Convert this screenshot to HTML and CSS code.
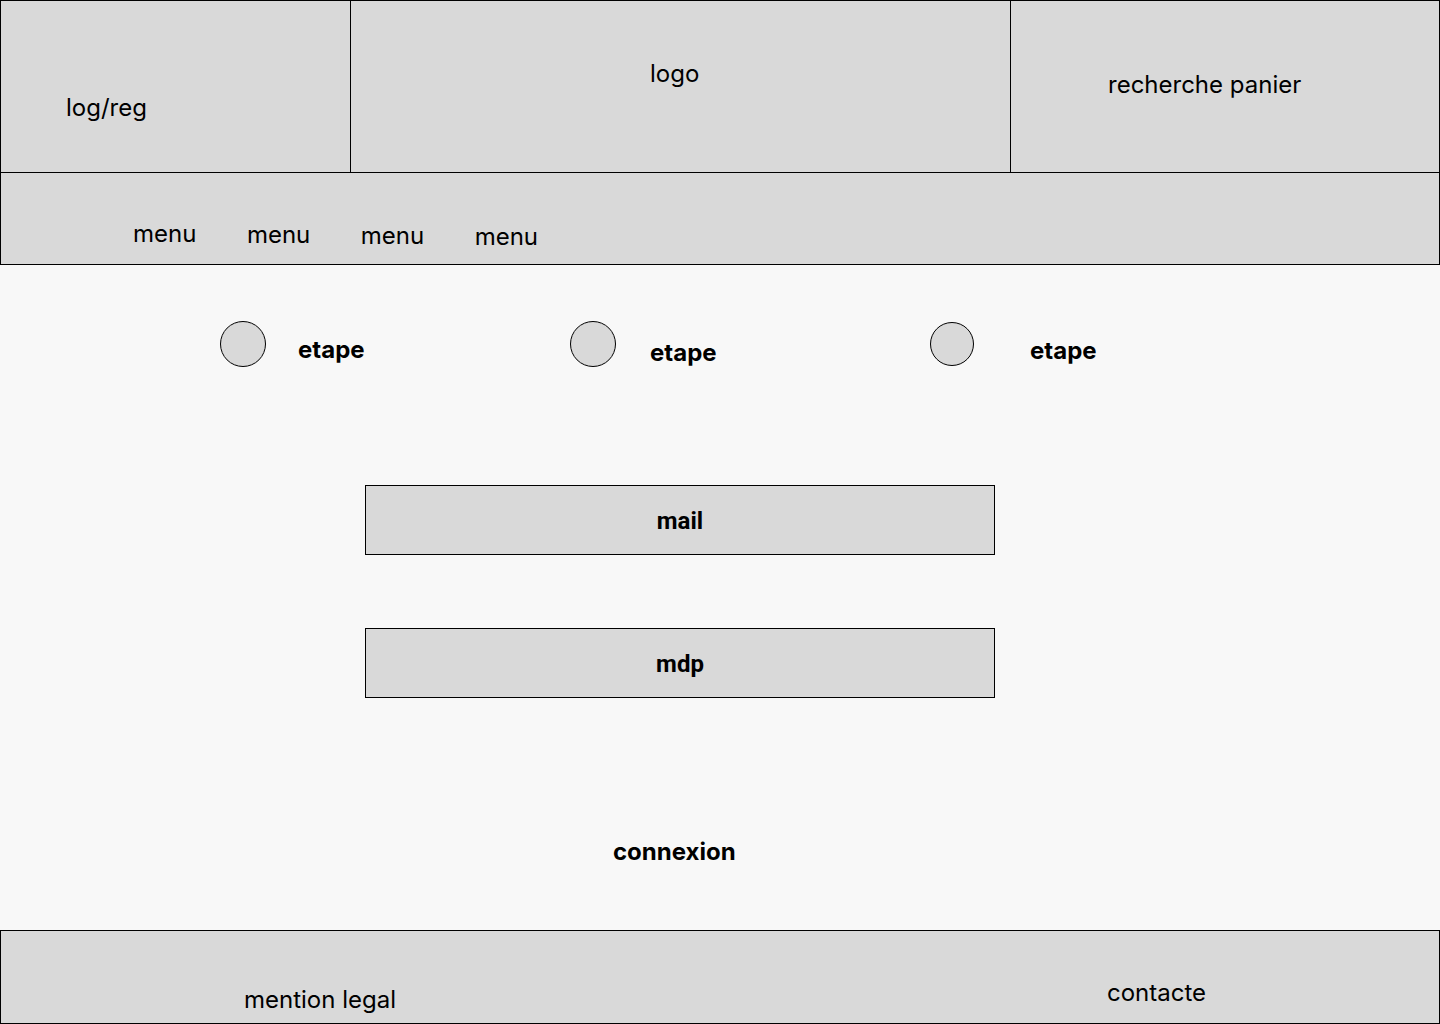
FILE: index.html
```html
<!DOCTYPE html>
<html lang="fr">
<head>
  <meta charset="UTF-8">
  <meta name="viewport" content="width=device-width, initial-scale=1.0">
  <title>connexion</title>
  <link rel="stylesheet" href="styles.css">
</head>
<body>
<header class="header">
  <div class="top">
    <div class="cell cell-auth">log/reg</div>
    <div class="cell cell-logo">logo</div>
    <div class="cell cell-tools">recherche panier</div>
  </div>
  <nav class="nav">
    <a class="menu" href="#">menu</a>
    <a class="menu" href="#">menu</a>
    <a class="menu" href="#">menu</a>
    <a class="menu" href="#">menu</a>
  </nav>
</header>

<main class="main">
  <div class="steps">
    <div class="step step-1">
      <span class="dot"></span>
      <span class="step-label">etape</span>
    </div>
    <div class="step step-2">
      <span class="dot"></span>
      <span class="step-label">etape</span>
    </div>
    <div class="step step-3">
      <span class="dot"></span>
      <span class="step-label">etape</span>
    </div>
  </div>

  <form class="login">
    <div class="field">mail</div>
    <div class="field">mdp</div>
    <div class="submit">connexion</div>
  </form>
</main>

<footer class="footer">
  <span class="legal">mention legal</span>
  <span class="contact">contacte</span>
</footer>
</body>
</html>
```

FILE: styles.css
```css
* {
  margin: 0;
  padding: 0;
  box-sizing: border-box;
}
body {
  width: 1440px;
  background-color: #f8f8f8;
  color: #000;
  font-family: Inter, "Noto Sans", sans-serif;
  font-size: 24px;
  line-height: 29px;
}

/* header */
.top {
  display: flex;
  height: 173px;
  border: 1px solid #000;
  background-color: #d9d9d9;
}
.cell {
  border-right: 1px solid #000;
}
.cell-auth {
  width: 350px;
  padding: 92px 0 0 65px;
}
.cell-logo {
  width: 660px;
  padding: 58px 0 0 299px;
}
.cell-tools {
  flex: 1;
  border-right: none;
  padding: 69px 0 0 97px;
}
.nav {
  display: flex;
  align-items: flex-start;
  gap: 50.5px;
  height: 92px;
  padding: 46px 0 0 132px;
  border: 1px solid #000;
  border-top: none;
  background-color: #d9d9d9;
}
.menu {
  color: #000;
  text-decoration: none;
}
.menu:nth-child(2) { margin-top: 1px; }
.menu:nth-child(3) { margin-top: 2px; }
.menu:nth-child(4) { margin-top: 3px; }

/* main */
.main {
  height: 665px;
  padding-top: 56px;
}
.steps {
  display: flex;
  height: 46px;
  padding-left: 220px;
}
.step {
  display: flex;
  align-items: flex-start;
}
.step-1 { width: 350px; }
.step-2 { width: 360px; }
.dot {
  width: 46px;
  height: 46px;
  border: 1px solid #000;
  border-radius: 50%;
  background-color: #d9d9d9;
}
.step-label {
  font-weight: 700;
}
.step-1 .step-label { margin: 14px 0 0 32px; }
.step-2 .step-label { margin: 17px 0 0 34px; }
.step-3 .dot {
  width: 44px;
  height: 44px;
  margin-top: 1px;
}
.step-3 .step-label { margin: 15px 0 0 56px; }

.login {
  display: flex;
  flex-direction: column;
  gap: 73px;
  width: 630px;
  margin: 118px 0 0 365px;
}
.field {
  display: flex;
  align-items: center;
  justify-content: center;
  height: 70px;
  padding-top: 1px;
  border: 1px solid #000;
  background-color: #d9d9d9;
  font-family: Roboto, "Liberation Sans", sans-serif;
  font-weight: 700;
  line-height: 28px;
}
.submit {
  margin: 66px 0 0 248px;
  font-weight: 700;
}

/* footer */
.footer {
  display: flex;
  align-items: flex-start;
  height: 94px;
  border: 1px solid #000;
  background-color: #d9d9d9;
}
.legal {
  margin: 54px 0 0 243px;
}
.contact {
  margin: 47px 0 0 711px;
}
```
